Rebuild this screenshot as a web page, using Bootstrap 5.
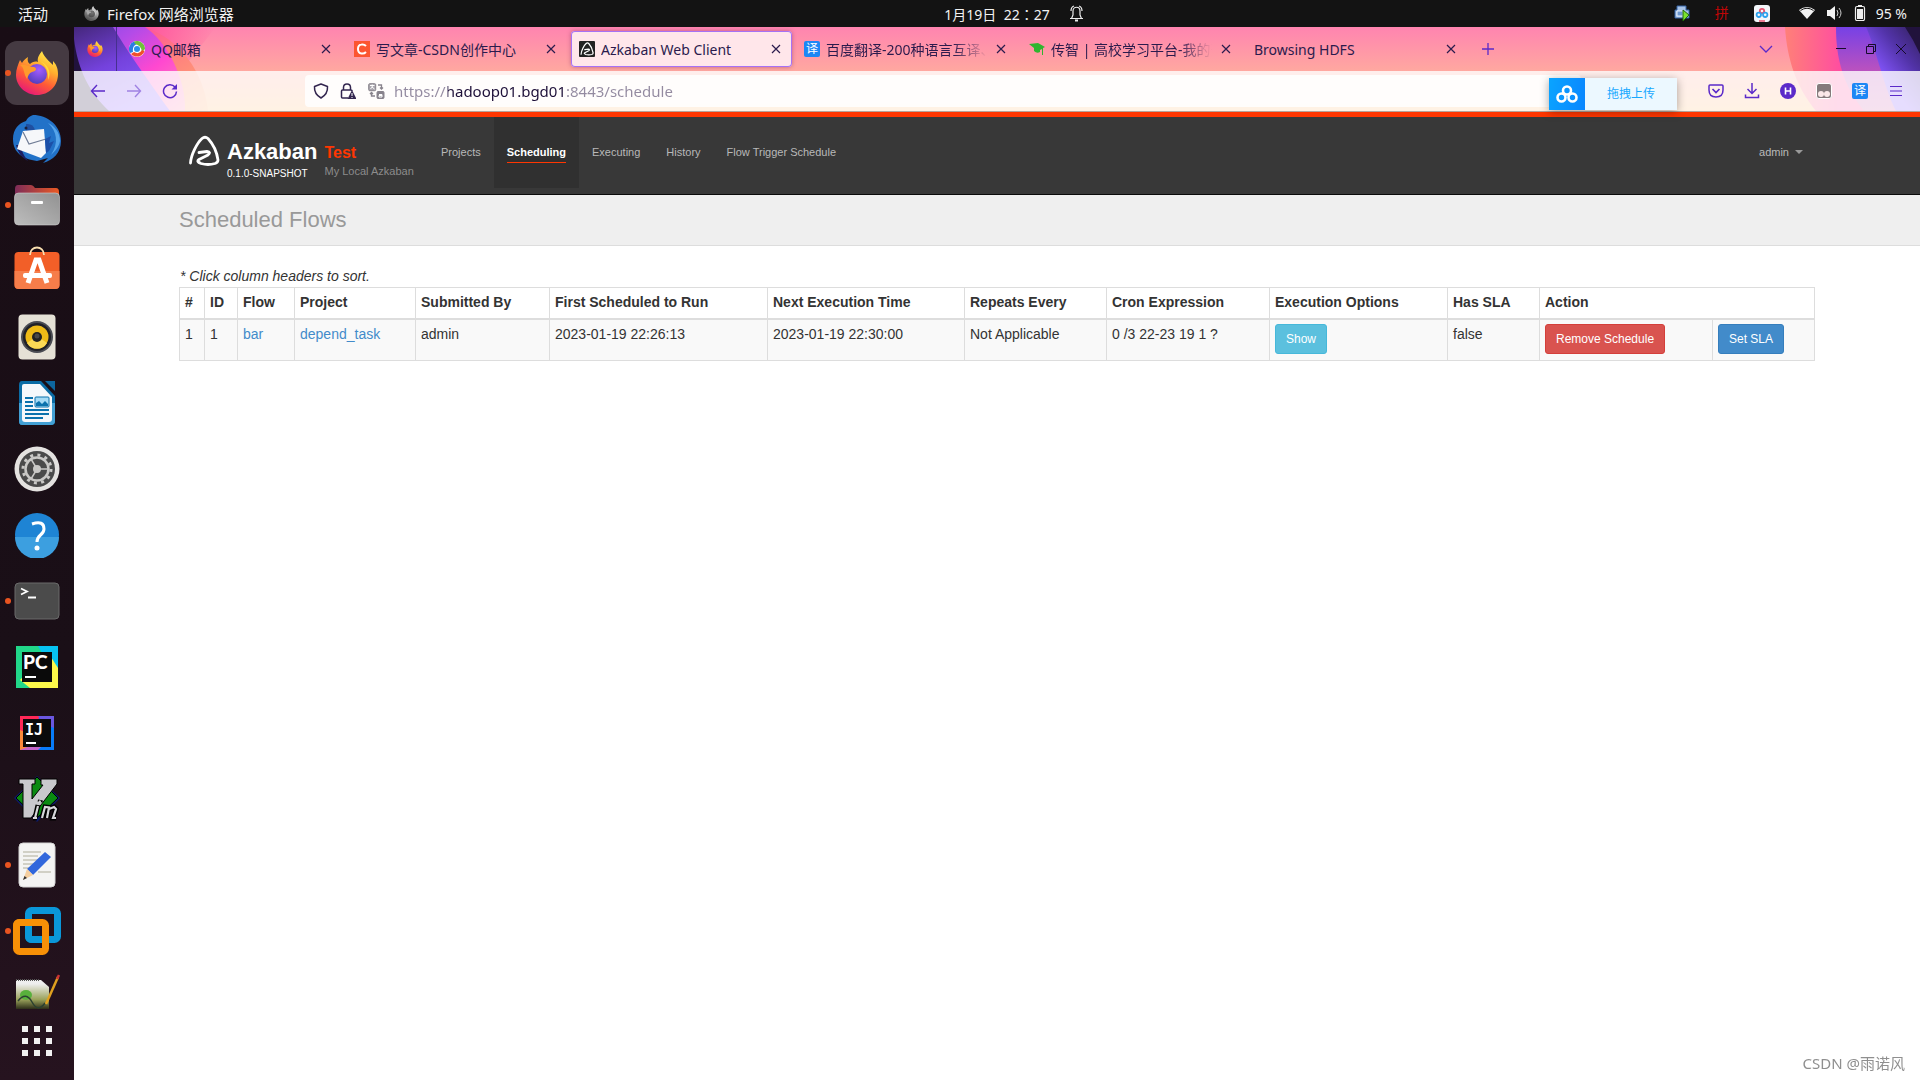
<!DOCTYPE html>
<html lang="zh-CN">
<head>
<meta charset="utf-8">
<meta name="viewport" content="width=device-width, initial-scale=1">
<title>Azkaban Web Client</title>
<link href="https://cdn.jsdelivr.net/npm/bootstrap@5.3.0/dist/css/bootstrap.min.css" rel="stylesheet">
<style>
  :root { --ui: "Noto Sans", "Noto Sans CJK SC", sans-serif; --web: "Liberation Sans", "Noto Sans CJK SC", sans-serif; --ink: #2b1b4d; --violet: #5b2ac9; }
  body { font-family: var(--ui); font-size: 14px; line-height: 20px; background: #fff; }
  svg { display: block; flex: none; }
  button { font-family: inherit; }
  .plain-btn { background: none; border: 0; padding: 0; color: inherit; display: flex; align-items: center; justify-content: center; }

  /* desktop top bar */
  .desk-bar { display: grid; grid-template-columns: 74px 1fr auto 1fr; height: 27px; background: #131313; color: #f2f2f2; }
  .desk-bar .clock { font-family: "Noto Sans", "Noto Sans CJK TC", sans-serif; gap: 20px; padding-left: 33px; }
  .desk-bar .clock span { padding-top: 4px; }
  .activities { font-size: 15px; padding: 2px 8px 0 0; }
  .app-name { font-size: 15px; padding-top: 2px; }
  .status-icons { padding-right: 13px; }
  .status-icons .pinyin { width: 64px; color: #c00606; }
  .status-icons .level { padding: 2px 0 0 6px; }

  /* dock */
  .dock { width: 74px; background: linear-gradient(#190d15, #1a0f17 60%, #26131f); padding: 14px 5px 7px; }
  .dock-list { min-height: 0; overflow: hidden; gap: 2px; }
  .dock-item { position: relative; width: 64px; height: 64px; flex: none; border-radius: 12px; }
  .dock-item.current { background: #453a42; }
  .dock-item.running::before { content: ""; position: absolute; left: 0; top: 29px; width: 6px; height: 6px; border-radius: 50%; background: #e95420; }

  /* browser chrome */
  .chrome { position: relative; background: linear-gradient(#ff84b0, #ffa8a0 44px, #ffbe78 84px); color: var(--ink); }
  .theme-art { position: absolute; top: 0; height: 84px; }
  .theme-art.start-art { left: 0; }
  .theme-art.end-art { right: 0; }
  .tab-strip { position: relative; height: 44px; }
  .pinned { width: 43px; height: 44px; border-right: 1px solid #46308f; margin-right: 4px; }
  .tab-list { gap: 4px; }
  .tab-box { width: 221px; height: 36px; padding: 0 8px; border-radius: 4px; gap: 6px; }
  .tab-box.current { background: #ffe6ea; box-shadow: 0 0 0 1px #a672f5 inset, 0 0 4px #80306080; }
  .tab-link { flex: 1; min-width: 0; color: var(--ink); text-decoration: none; white-space: nowrap; overflow: hidden; padding-top: 2px; }
  .tab-link.faded { -webkit-mask-image: linear-gradient(to left, transparent, #000 34px); mask-image: linear-gradient(to left, transparent, #000 34px); }
  .tab-close { width: 16px; height: 16px; }
  .win-btn { width: 30px; height: 30px; }
  .new-tab { margin-left: 6px; }
  .all-tabs { margin-right: 45px; }
  .tool-row { position: relative; height: 41px; background: rgba(255,255,255,.8); border-bottom: 1px solid #b5a39c; color: var(--violet); padding: 0 6px; }
  .tool-btn { width: 36px; height: 36px; }
  .address { flex: 1; height: 32px; margin: 0 117px; padding: 0 8px; border-radius: 4px; background: rgba(255,255,255,.85); color: #33264f; }
  .address input { flex: 1; border: 0; outline: 0; padding: 1px 0 0; margin-left: 1px; font-size: 15px; height: 24px; color: transparent; background: linear-gradient(to right, #938aa0 54px, #1d0f38 54px, #1d0f38 171px, #938aa0 171px); -webkit-background-clip: text; background-clip: text; -webkit-text-fill-color: transparent; }
  .upload-pill { position: absolute; right: 243px; top: 51px; height: 32px; z-index: 5; background: #ecf8ff; color: #18a8ff; box-shadow: 0 2px 10px rgba(0,0,0,.35); font-size: 12px; }
  .upload-pill .pill-logo { width: 36px; height: 32px; background: linear-gradient(100deg, #0aa4ff, #0a86ff); }
  .upload-pill .pill-text { width: 92px; }

  /* Azkaban page */
  .web { font-family: var(--web); color: #333; font-size: 14px; }
  .az-bar { background: #383838; border-top: 5px solid #ff3601; border-bottom: 1px solid #0a0a0a; height: 83px; padding: 0 105px; align-items: flex-start; }
  .az-brand { padding: 18px 0 0 9px; gap: 6px; width: 249px; color: #fff; text-decoration: none; }
  .az-title { font-size: 22px; line-height: 24px; padding: 5px 1px 0; font-weight: bold; }
  .az-sub { font-size: 10px; line-height: 12px; padding: 4px 1px 0; }
  .az-env { font-size: 16px; line-height: 24px; padding-top: 6px; font-weight: bold; color: #ff3601; }
  .az-envsub { font-size: 11px; line-height: 12px; color: #8c8c8c; }
  .az-nav .nav-link { font-size: 11px; line-height: 20px; height: 71px; padding: 25px 13px 0; color: #b8b8b8; }
  .az-nav .nav-link.active { background: #303030; color: #fff; font-weight: bold; }
  .az-nav .nav-link.active span { display: block; border-bottom: 1px solid #ff3601; }
  .az-user { padding: 25px 12px 0; font-size: 11px; line-height: 20px; color: #b8b8b8; gap: 6px; }
  .az-user::after { margin: 0; border-top-width: 4px; border-left-width: 4px; border-right-width: 4px; color: #999; }
  .az-head { background: #efefef; border-bottom: 1px solid #ddd; height: 51px; padding: 13px 105px 0; }
  .az-head h1 { font-size: 22px; line-height: 24px; color: #999; font-weight: 400; margin: 0; }
  .az-main { padding: 20px 105px; }
  .az-hint { font-style: italic; line-height: 20px; padding-left: 1px; margin: 0 0 1px; }
  .flow-table { --bs-table-striped-bg: #f9f9f9; --bs-table-striped-color: #333; table-layout: fixed; border-color: #ddd; color: #333; margin: 0; border-collapse: collapse; }
  .flow-table > :not(caption) > * > * { padding: 4px 5px; border: 1px solid #ddd; line-height: 20px; white-space: nowrap; }
  .flow-table > thead > tr > th { border-bottom-width: 2px; height: 32px; vertical-align: top; }
  .flow-table > tbody > tr > td { height: 41px; }
  .flow-table a { color: #428bca; text-decoration: none; }
  .act-btn { font-size: 12px; line-height: 18px; padding: 5px 10px; border-radius: 3px; color: #fff; display: block; --bs-btn-color: #fff; }
  .act-info { background: #5bc0de; border-color: #46b8da; }
  .act-danger { background: #d9534f; border-color: #d43f3a; }
  .act-primary { background: #428bca; border-color: #357ebd; }
  .watermark { position: fixed; right: 15px; bottom: 6px; font-size: 15px; line-height: 22px; color: #8f8f8f; }
</style>
</head>
<body class="vh-100 d-flex flex-column overflow-hidden">

<svg width="0" height="0" class="position-absolute" aria-hidden="true">
  <defs>
    <linearGradient id="ffFlame" x1=".8" y1="0" x2=".3" y2="1"><stop offset="0" stop-color="#fff44f"/><stop offset=".35" stop-color="#ffb02e"/><stop offset=".65" stop-color="#ff5a36"/><stop offset="1" stop-color="#e6177a"/></linearGradient>
    <radialGradient id="ffGlobe" cx=".6" cy=".3" r=".8"><stop offset="0" stop-color="#a35cff"/><stop offset="1" stop-color="#4a3bb5"/></radialGradient>
    <symbol id="firefox" viewBox="0 0 44 44">
      <path d="M27 0C24 4 22 7 23 11C20 10 17 11 15 13C13 12 12 9 13 6C10 8 8 10 7 12L5 9C3 14 1 18 1 24C1 35 11 44 22 44C34 44 43 35 43 23C43 17 41 13 38 10L38 14C34 10 29 6 27 0Z" fill="url(#ffFlame)"/>
      <circle cx="22" cy="23" r="10" fill="url(#ffGlobe)"/>
      <path d="M5 14C9 12 14 16 19 16C22 17 22 20 17 21C14 22 13 25 12 28C8 22 10 17 5 14Z" fill="#ff9a2c"/>
      <path d="M25 10C33 13 37 22 33 29C34 21 31 14 25 10Z" fill="#ffd93b"/>
    </symbol>
    <symbol id="close" viewBox="0 0 16 16"><path d="M4 4L12 12M12 4L4 12" stroke="currentColor" stroke-width="1.2"/></symbol>
    <symbol id="azlogo" viewBox="0 0 32 32"><path d="M2.500 28C3 20 9 8 14 3.500Q17 1 20 3.500C25 9 29 18 30 25Q30 27.500 27 28.500Q20 30.500 13 28.500Q8 26.500 11 24.500L20 20Q23.500 17 19 16.500L11 17.500" fill="none" stroke="#fff" stroke-width="2.800" stroke-linejoin="round" stroke-linecap="round"/></symbol>
  </defs>
</svg>

<header class="desk-bar">
  <button class="plain-btn activities" type="button">活动</button>
  <div class="d-flex align-items-center">
    <svg class="me-2" style="filter:grayscale(1);margin-left:10px" width="15" height="15" aria-hidden="true"><use href="#firefox"/></svg>
    <span class="app-name">Firefox 网络浏览器</span>
  </div>
  <div class="clock d-flex align-items-center">
    <span lang="zh-TW">1月19日&nbsp; 22：27</span>
    <svg width="13" height="17" viewBox="0 0 13 17" fill="none" stroke="#eee" stroke-width="1.200"><path d="M0 13.500H13M1.500 13.500L3 10V6C3 1 10 1 10 6V10L11.500 13.500M1 6Q1 2 4 1M12 6Q12 2 9 1"/><path d="M5 15.500H8" stroke-width="2"/></svg>
  </div>
  <div class="status-icons d-flex align-items-center justify-content-end">
    <svg width="16" height="17" viewBox="0 0 16 17"><path d="M3 1H12V5H15V13H1V5H3Z" fill="#a9c4e8" stroke="#3463a5"/><path d="M3 6H9V11H3Z" fill="#6b96cf" stroke="#e5eefa"/><path d="M9 5L15 10L9 16Z" fill="#7be32c" stroke="#1f6b0b"/></svg>
    <span class="pinyin d-flex justify-content-center">拼</span>
    <svg width="16" height="17" viewBox="0 0 16 17"><rect width="16" height="17" rx="3" fill="#f3f6fa"/><g fill="none" stroke-width="1.800"><circle cx="8" cy="6" r="2.200" stroke="#e7526f"/><circle cx="4.800" cy="9.800" r="2.200" stroke="#2aa1ee"/><circle cx="11.200" cy="9.800" r="2.200" stroke="#2aa1ee"/></g><path d="M5 16H11" stroke="#e7526f" stroke-width="1.500"/></svg>
    <svg class="ms-4" width="24" height="14" viewBox="-5 0 24 14"><path d="M0 4Q8 -2 16 4L8 13Z" fill="#f2f2f2"/><path d="M1.500 4.500Q8 0 14.500 4.500" fill="none" stroke="#131313"/></svg>
    <svg class="ms-2" width="20" height="14" viewBox="-1 0 20 14"><path d="M0 4H3L8 0V14L3 10H0Z" fill="#f2f2f2"/><path d="M10 4Q12 7 10 10M12 2Q16 7 12 12" fill="none" stroke="#ccc"/></svg>
    <svg class="ms-2 me-1" width="12" height="16" viewBox="0 0 12 16"><path d="M4 0H8V2H4Z" fill="#eee"/><rect x="1.500" y="1.500" width="9" height="14" rx="1.500" fill="none" stroke="#eee" stroke-width="1.200"/><path d="M3 4H9V14H3Z" fill="#eee"/></svg>
    <span class="level">95 %</span>
  </div>
</header>

<div class="d-flex flex-grow-1" style="min-height:0">
  <nav class="dock d-flex flex-column flex-shrink-0" aria-label="Dock">
    <div class="dock-list d-flex flex-column flex-grow-1">
      <button class="plain-btn dock-item current running" type="button" aria-label="Firefox"><svg width="44" height="44"><use href="#firefox"/></svg></button>
      <button class="plain-btn dock-item" type="button" aria-label="Thunderbird"><svg width="48" height="48" viewBox="0 0 48 48">
        <path d="M20 0C34 0 48 10 48 26C48 38 40 45 30 48L35 43L24 46C10 44 0 38 0 24C0 14 6 8 13 6C14 3 17 1 20 0Z" fill="#2272c8"/>
        <path d="M3 30C5 38 9 43 15 46C9 38 8 34 9 30Z" fill="#1b1e63"/><path d="M35 8C44 16 46 28 38 40C42 36 46 32 47 26C47 18 42 11 35 8Z" fill="#55a4ea"/><path d="M13 9Q20 8 22 15L13 18Z" fill="#1f4fa0"/>
        <path d="M10 16L31 14L33 38L28 43L4 34Z" fill="#f6f7fa"/><path d="M10 17L16 29L33 24" fill="none" stroke="#6f7c95" stroke-width="1.200"/><path d="M32 24L38 21L36 28L41 26L36 36L33 38Z" fill="#1c4fa8"/><circle cx="13" cy="13" r="1.500" fill="#18203f"/></svg></button>
      <button class="plain-btn dock-item running" type="button" aria-label="文件"><svg width="46" height="42" viewBox="0 0 46 42">
        <defs><linearGradient id="fol"><stop offset="0" stop-color="#7d2c58"/><stop offset="1" stop-color="#ea5a24"/></linearGradient><linearGradient id="fog" x1="1" y1="0" x2="0" y2="1"><stop offset="0" stop-color="#929292"/><stop offset="1" stop-color="#bdbdbd"/></linearGradient></defs>
        <path d="M1 5Q1 1 4 1H17Q19 1 21 4H42Q45 4 45 8V20H1Z" fill="url(#fol)"/><rect x=".5" y="9" width="45" height="32" rx="4" fill="url(#fog)" stroke="#d0d0d0" stroke-width=".6"/><rect x="17" y="17" width="12" height="3" rx="1" fill="#fff"/></svg></button>
      <button class="plain-btn dock-item" type="button" aria-label="Ubuntu Software"><svg width="46" height="50" viewBox="0 0 46 50">
        <rect x=".5" y="6" width="45" height="37" rx="4" fill="#f25f28"/><path d="M.5 25H45.500V39Q45.500 43 41 43H5Q.5 43 .5 39Z" fill="#f67d4a"/><path d="M16 9C16 -1 30 -1 30 9" fill="none" stroke="#f9dfb0" stroke-width="1.800"/>
        <path d="M14 37L22 14H25L33 37" fill="none" stroke="#fff" stroke-width="5"/><rect x="9" y="27" width="29" height="5" rx="2" fill="#fff"/></svg></button>
      <button class="plain-btn dock-item" type="button" aria-label="Rhythmbox"><svg width="38" height="46" viewBox="0 0 38 46">
        <rect x=".5" y=".5" width="37" height="45" rx="4" fill="#e5e1d6"/><circle cx="19" cy="23" r="16" fill="#4a4c53"/><circle cx="19" cy="23" r="14" fill="#202127"/><circle cx="19" cy="23" r="11.500" fill="#efbb17"/><path d="M9 29A11.500 11.500 0 0 0 29 29L22 24H16Z" fill="#fad955"/><circle cx="19" cy="23" r="5" fill="#222"/><circle cx="19" cy="22" r="2.500" fill="#484848"/></svg></button>
      <button class="plain-btn dock-item" type="button" aria-label="LibreOffice Writer"><svg width="38" height="46" viewBox="0 0 38 46">
        <path d="M4 1H23L37 16V41Q37 45 33 45H4Q1 45 1 41V5Q1 1 4 1Z" fill="#0b6ca5"/><path d="M1 23H37V41Q37 45 33 45H4Q1 45 1 41Z" fill="#42a0d4"/><path d="M6 4H22L34 17V39Q34 42 31 42H7Q4 42 4 39V6Q4 4 6 4Z" fill="#f5f8fb"/><path d="M27 1H37V11Z" fill="#0d669e"/>
        <path d="M7 18H15M7 22H15M7 26H15M7 30H31M7 34H31M7 38H25" stroke="#0b72ad" stroke-width="2"/><rect x="17" y="17" width="14" height="10" rx="1" fill="#a6dbf5" stroke="#0b72ad"/><path d="M18 26V23L21 21L24 24L27 21L30 24V26Z" fill="#0b72ad"/></svg></button>
      <button class="plain-btn dock-item" type="button" aria-label="设置"><svg width="46" height="46" viewBox="0 0 46 46">
        <circle cx="23" cy="23" r="22.500" fill="#e4e2e0"/><circle cx="23" cy="23" r="18" fill="#4a4a4a"/><circle cx="23" cy="23" r="14" fill="none" stroke="#c9c8c6" stroke-width="3" stroke-dasharray="3 4.330"/><circle cx="23" cy="23" r="11.500" fill="none" stroke="#c9c8c6" stroke-width="2.500"/><circle cx="23" cy="23" r="4" fill="#c9c8c6"/><path d="M23 23H34M23 23L17 13M23 23L17 33" stroke="#c9c8c6" stroke-width="1.500"/></svg></button>
      <button class="plain-btn dock-item" type="button" aria-label="帮助"><svg width="46" height="46" viewBox="0 0 46 46">
        <circle cx="23" cy="23" r="22" fill="#1e84d4"/><path d="M1 25A22 22 0 0 0 45 25Z" fill="#3c9fe0"/><path d="M18 12Q30 8 30 17Q30 20 26.500 23Q23 26 23 30" fill="none" stroke="#fff" stroke-width="3"/><circle cx="23" cy="36" r="2.500" fill="#fff"/></svg></button>
      <button class="plain-btn dock-item running" type="button" aria-label="终端"><svg width="46" height="38" viewBox="0 0 46 38">
        <rect x="1" y="1" width="44" height="36" rx="4" fill="#4b4b4b" stroke="#6a6a6a"/><path d="M7 6.500L13 9.500L7 12.500M14 15.500H22" fill="none" stroke="#fff" stroke-width="1.800"/></svg></button>
      <button class="plain-btn dock-item" type="button" aria-label="PyCharm"><svg width="42" height="42" viewBox="0 0 42 42">
        <path d="M0 0H42V42H0Z" fill="#21d789"/><path d="M22 0H42V24L30 14Z" fill="#07c3f2"/><path d="M42 14V42H14L4 34L30 6Z" fill="#fcf84a"/><path d="M28 0H42V22Z" fill="#07c3f2"/><path d="M6 6H36V36H6Z" fill="#0a0a0a"/><path d="M9 31H20" stroke="#fff" stroke-width="2"/><text x="7" y="23" font-family="Lato" font-weight="900" font-size="19" fill="#fff">PC</text></svg></button>
      <button class="plain-btn dock-item" type="button" aria-label="IntelliJ IDEA"><svg width="34" height="34" viewBox="0 0 34 34">
        <path d="M0 0H34V34H0Z" fill="#087cfa"/><path d="M0 0H20L8 24L0 18Z" fill="#fe2857"/><path d="M18 0H34V12L24 8Z" fill="#6b57e0"/><path d="M0 14L10 18V34L0 34Z" fill="#f98a3c"/><path d="M10 30H22L18 34H0Z" fill="#c264c9"/><path d="M3 3H31V31H3Z" fill="#0b0b0c"/><path d="M6 27H16" stroke="#fff" stroke-width="2"/><text x="5" y="19" font-family="DejaVu Sans Mono" font-weight="700" font-size="15" fill="#fff">IJ</text></svg></button>
      <button class="plain-btn dock-item" type="button" aria-label="Vim"><svg width="46" height="46" viewBox="0 0 46 46">
        <path d="M23 0L46 22L23 46L0 22Z" fill="#0c1b6b"/><path d="M23 1L44 22L23 42L2 22Z" fill="#0a8a12" stroke="#000"/><path d="M5 3H21V8H18V23L29 9H27V3H43V8L17 42H9V8H5Z" fill="#c9c9cd" stroke="#000"/><path d="M24 29L21 42M26 26L26.500 24M28 42L31 31L35 31.500L33 42M35 33L40 31L42 33L39 42H42M19 42H23" fill="none" stroke="#000" stroke-width="5"/><path d="M24 30L21 42M25.500 26.500L26 24.500M28 42L31 31L35 31.500L33 42M35 33L40 31L42 33L39 42H42M19 42H23" fill="none" stroke="#d6d6da" stroke-width="2.200"/></svg></button>
      <button class="plain-btn dock-item running" type="button" aria-label="文本编辑器"><svg width="38" height="46" viewBox="0 0 38 46">
        <rect x="1" y="1" width="36" height="44" rx="4" fill="#f4f4f3" stroke="#d5d5d5"/><path d="M5 10H23M5 14H20M5 18H26M5 22H19M5 26H16M20 30H33" stroke="#c5c3b8" stroke-width="1.600"/><path d="M9 27L27 10L33 15L15 33Z" fill="#3167dc"/><path d="M9 27L15 33L5 38Z" fill="#f5cfa0"/><path d="M5 38L6.500 34L9 36Z" fill="#333"/></svg></button>
      <button class="plain-btn dock-item running" type="button" aria-label="VMware"><svg width="48" height="48" viewBox="0 0 48 48" fill="none" stroke-width="7">
        <rect x="15.500" y="3.500" width="29" height="29" rx="3" stroke="#0a97d9"/><rect x="3.500" y="15.500" width="29" height="29" rx="3" stroke="#f79007"/><path d="M15.500 19V29Q15.500 32.500 19 32.500H29" stroke="#0a97d9"/><path d="M3.500 32V19Q3.500 15.500 7 15.500H22" stroke="#f79007"/></svg></button>
      <button class="plain-btn dock-item" type="button" aria-label="Notepad"><svg width="46" height="52" viewBox="0 0 46 52">
        <defs><linearGradient id="npg" x2="0" y2="1"><stop offset=".1" stop-color="#eee"/><stop offset=".5" stop-color="#9aa25b"/><stop offset=".75" stop-color="#2a2a17"/></linearGradient></defs><path d="M2 9H27L35 16V48H2Z" fill="url(#npg)"/><path d="M2 9H26" stroke="#555" stroke-dasharray="1 1" stroke-width="2"/><ellipse cx="12" cy="24" rx="6" ry="5" fill="#58b03c"/><path d="M4 30Q12 20 18 31T31 32" stroke="#2b4030" fill="none" stroke-width="1.500"/><path d="M44 6L32 33" stroke="#dfa01f" stroke-width="2.500"/><path d="M45 4L43 8" stroke="#c33" stroke-width="2.500"/></svg></button>
    </div>
    <button class="plain-btn dock-item" type="button" aria-label="显示应用程序"><svg width="30" height="30" viewBox="0 0 30 30" fill="#f2f2f2"><path d="M0 0h6v6h-6zM12 0h6v6h-6zM24 0h6v6h-6zM0 12h6v6h-6zM12 12h6v6h-6zM24 12h6v6h-6zM0 24h6v6h-6zM12 24h6v6h-6zM24 24h6v6h-6z"/></svg></button>
  </nav>

  <div class="flex-grow-1 d-flex flex-column" style="min-width:0">
    <div class="chrome">
      <svg class="theme-art start-art" width="150" height="84" viewBox="0 0 150 84" aria-hidden="true">
        <defs>
          <linearGradient id="a1" x1="0" y1="0" x2="1" y2="1"><stop offset="0" stop-color="#ff5c9d"/><stop offset=".25" stop-color="#ff4f9f"/><stop offset=".5" stop-color="#ff7a80"/><stop offset="1" stop-color="#ffb070"/></linearGradient>
          <linearGradient id="a2" x1="0" y1="0" x2="1" y2="1"><stop offset="0" stop-color="#7d48e8"/><stop offset=".3" stop-color="#b44be8"/><stop offset=".6" stop-color="#ff48d0"/><stop offset="1" stop-color="#ff90b0"/></linearGradient>
          <linearGradient id="a3" x1="0" y1="0" x2=".5" y2="1"><stop offset="0" stop-color="#45277c"/><stop offset=".5" stop-color="#7442dc"/><stop offset="1" stop-color="#8a5cff"/></linearGradient>
          <linearGradient id="a0"><stop offset="0" stop-color="#ff4f9a"/><stop offset="1" stop-color="#ff4f9a" stop-opacity="0"/></linearGradient>
        </defs>
        <path d="M60 0H142L110 40Z" fill="url(#a0)"/>
        <path d="M0 0H71C105 12 130 44 134 84H0Z" fill="url(#a1)"/>
        <path d="M0 0H71C92 14 112 50 111 84H0Z" fill="url(#a2)"/>
        <path d="M0 0H39C52 22 66 42 96 84H0Z" fill="url(#a3)"/>
        <path d="M0 12C4 44 16 66 35 84H0Z" fill="#21123c"/>
      </svg>
      <svg class="theme-art end-art" width="180" height="84" viewBox="0 0 180 84" aria-hidden="true">
        <defs>
          <linearGradient id="b1"><stop offset="0" stop-color="#ff8078"/><stop offset=".4" stop-color="#ff4f9f"/></linearGradient>
          <linearGradient id="b2" x2="0" y2="1"><stop offset="0" stop-color="#7641e6"/><stop offset=".5" stop-color="#b851c0"/><stop offset="1" stop-color="#d070b0"/></linearGradient>
          <linearGradient id="b3" x1="1" y1="0" x2=".2" y2="1"><stop offset="0" stop-color="#32205c"/><stop offset=".35" stop-color="#5233a8"/><stop offset=".7" stop-color="#8355fb"/></linearGradient>
        </defs>
        <path d="M45 0C47 32 56 60 76 84H180V0Z" fill="url(#b1)"/>
        <path d="M96 0C96 32 103 58 124 84H180V0Z" fill="url(#b2)"/>
        <path d="M126 0C136 22 144 60 156 84H180V0Z" fill="url(#b3)"/>
        <path d="M165 0Q173 12 180 27V0Z" fill="#21123c"/>
      </svg>

      <div class="tab-strip d-flex align-items-center">
        <div class="pinned d-flex align-items-center"><button class="plain-btn w-100" type="button" aria-label="Firefox"><svg width="16" height="16"><use href="#firefox"/></svg></button></div>
        <div class="tab-list d-flex">
          <div class="tab-box d-flex align-items-center">
            <svg width="16" height="16" viewBox="0 0 16 16"><circle cx="8" cy="8" r="8" fill="#fff"/><path d="M1 12A8 8 0 0 1 5 .6L8 3Q3 5 4 11Z" fill="#2a7de1"/><path d="M5 .6A8 8 0 0 1 16 8L13 11Q12 4 6 3Z" fill="#6fc03a"/><path d="M15.500 10A8 8 0 0 1 2 13L5 11Q10 14 13 9Z" fill="#f0502a"/><circle cx="8" cy="8" r="3" fill="#2a90e8"/></svg>
            <a class="tab-link" href="#">QQ邮箱</a><button class="plain-btn tab-close" type="button" aria-label="关闭"><svg width="16" height="16"><use href="#close"/></svg></button>
          </div>
          <div class="tab-box d-flex align-items-center">
            <svg width="16" height="16" viewBox="0 0 16 16"><path d="M0 0H16V16H0Z" fill="#fc5531"/><path d="M12 5Q10 3 7.500 3.500Q4 4 4 8T7.500 12.500Q10 13 12 11" fill="none" stroke="#fff" stroke-width="2"/></svg>
            <a class="tab-link" href="#">写文章-CSDN创作中心</a><button class="plain-btn tab-close" type="button" aria-label="关闭"><svg width="16" height="16"><use href="#close"/></svg></button>
          </div>
          <div class="tab-box current d-flex align-items-center">
            <svg width="16" height="16" viewBox="0 0 16 16"><rect width="16" height="16" rx="1" fill="#222"/><use href="#azlogo" x="1" y="1" width="14" height="14"/></svg>
            <a class="tab-link" href="#" aria-current="page">Azkaban Web Client</a><button class="plain-btn tab-close" type="button" aria-label="关闭"><svg width="16" height="16"><use href="#close"/></svg></button>
          </div>
          <div class="tab-box d-flex align-items-center">
            <svg width="16" height="16" viewBox="0 0 16 16"><rect width="16" height="16" rx="2" fill="#1c87f5"/><text x="2" y="12" font-size="12" fill="#fff">译</text></svg>
            <a class="tab-link faded" href="#">百度翻译-200种语言互译、</a><button class="plain-btn tab-close" type="button" aria-label="关闭"><svg width="16" height="16"><use href="#close"/></svg></button>
          </div>
          <div class="tab-box d-flex align-items-center">
            <svg width="16" height="16" viewBox="0 0 16 16" fill="#2fb52f"><path d="M0 3L9 2L16 6L14 7V14H13V8L11 9V11Q8 13 5 10V7Z"/></svg>
            <a class="tab-link faded" href="#">传智 | 高校学习平台-我的预</a><button class="plain-btn tab-close" type="button" aria-label="关闭"><svg width="16" height="16"><use href="#close"/></svg></button>
          </div>
          <div class="tab-box d-flex align-items-center">
            <a class="tab-link" href="#">Browsing HDFS</a><button class="plain-btn tab-close" type="button" aria-label="关闭"><svg width="16" height="16"><use href="#close"/></svg></button>
          </div>
        </div>
        <button class="plain-btn win-btn new-tab" style="color:var(--violet)" type="button" aria-label="新建标签页"><svg width="14" height="14" viewBox="0 0 14 14"><path d="M7 1V13M1 7H13" stroke="currentColor" stroke-width="1.300"/></svg></button>
        <button class="plain-btn win-btn ms-auto all-tabs" style="color:var(--violet)" type="button" aria-label="标签列表"><svg width="14" height="8" viewBox="0 0 14 8"><path d="M1 1L7 7L13 1" fill="none" stroke="currentColor" stroke-width="1.300"/></svg></button>
        <button class="plain-btn win-btn" type="button" aria-label="最小化"><svg width="10" height="10" viewBox="0 0 10 10"><path d="M0 4.500H10" stroke="#160b2b"/></svg></button>
        <button class="plain-btn win-btn" type="button" aria-label="还原"><svg width="10" height="10" viewBox="0 0 10 10" fill="none" stroke="#160b2b"><path d="M.5 2.500H7.500V9.500H.5ZM2.500 2.500V.5H9.500V7.500H7.500"/></svg></button>
        <button class="plain-btn win-btn me-1" type="button" aria-label="关闭窗口"><svg width="10" height="10" viewBox="0 0 10 10"><path d="M0 0L10 10M10 0L0 10" stroke="#160b2b"/></svg></button>
      </div>

      <div class="tool-row d-flex align-items-center">
        <button class="plain-btn tool-btn" type="button" aria-label="后退"><svg width="16" height="14" viewBox="0 0 16 14"><path d="M7 1L1.500 7L7 13M2 7H15" fill="none" stroke="currentColor" stroke-width="1.400"/></svg></button>
        <button class="plain-btn tool-btn opacity-50" type="button" aria-label="前进"><svg width="16" height="14" viewBox="0 0 16 14"><path d="M9 1L14.500 7L9 13M14 7H1" fill="none" stroke="currentColor" stroke-width="1.400"/></svg></button>
        <button class="plain-btn tool-btn" type="button" aria-label="刷新"><svg width="16" height="16" viewBox="0 0 16 16"><path d="M13 4A6.500 6.500 0 1 0 14.500 8.500" fill="none" stroke="currentColor" stroke-width="1.500"/><path d="M15 1V6.500H9.500Z" fill="currentColor"/></svg></button>
        <div class="address d-flex align-items-center">
          <svg width="16" height="16" viewBox="0 0 16 16"><path d="M8 1L14.500 3.500Q15 11 8 15Q1 11 1.500 3.500Z" fill="none" stroke="currentColor" stroke-width="1.500" stroke-linejoin="round"/></svg>
          <svg class="ms-2 me-1" style="padding-left:3px" width="19" height="16" viewBox="0 0 16 16"><path d="M3.500 7V4.500Q3.500 1 7 1T10.500 4.500V7M8 15H2.500Q1.500 15 1.500 14V8Q1.500 7 2.500 7H11Q12 7 12 8" fill="none" stroke="currentColor" stroke-width="1.500"/><path d="M12 7L16.500 16H7.500Z" fill="currentColor"/><path d="M12 10V13M12 14V15" stroke="#fff"/></svg>
          <svg class="ms-2 me-2" width="17" height="16" viewBox="0 0 17 16" fill="none" stroke="#88838c"><rect x=".7" y=".7" width="7" height="7" rx="1" fill="#aaa6ad"/><path d="M2 2.500H6.500M4.200 1.500V4L2.500 6M4 4L6.500 6" stroke="#fff"/><rect x="9" y="8.500" width="7" height="7" rx="1" fill="#88838c"/><path d="M11 11.500H14V14H11V12.500H14" stroke="#fff"/><path d="M10 2H13.500V6M12 4.500L13.500 6L15 4.500M7 13H3.500V10M2 11L3.500 9.500L5 11" stroke-width="1.300"/></svg>
          <input type="text" value="https://hadoop01.bgd01:8443/schedule" aria-label="地址">
        </div>
        <button class="plain-btn tool-btn" type="button" aria-label="Pocket"><svg width="16" height="16" viewBox="0 0 16 16" fill="none" stroke="currentColor" stroke-width="1.500"><path d="M2 2H14Q15 2 15 3V7Q15 14 8 14T1 7V3Q1 2 2 2Z"/><path d="M4.500 6L8 9.500L11.500 6" stroke-width="1.700"/></svg></button>
        <button class="plain-btn tool-btn" type="button" aria-label="下载"><svg width="16" height="16" viewBox="0 0 16 16" fill="none" stroke="currentColor" stroke-width="1.500"><path d="M8 0V10.500M3.500 6L8 10.500L12.500 6M1.500 11.500V14.500H14.500V11.500"/></svg></button>
        <button class="plain-btn tool-btn" type="button" aria-label="账户"><svg width="16" height="16" viewBox="0 0 16 16"><circle cx="8" cy="8" r="8" fill="currentColor"/><path d="M5.500 4.500V11.500M10.500 4.500V11.500M5.500 8H10.500" stroke="#fff" stroke-width="1.600"/></svg></button>
        <button class="plain-btn tool-btn" type="button" aria-label="Tampermonkey"><svg width="16" height="16" viewBox="0 0 16 16"><rect x=".5" y=".5" width="15" height="15" rx="2.500" fill="#857b7c" stroke="#fff"/><circle cx="5" cy="11" r="3" fill="#fbe9e9"/><circle cx="11" cy="11" r="3" fill="#fbe9e9"/></svg></button>
        <button class="plain-btn tool-btn" type="button" aria-label="翻译"><svg width="16" height="16" viewBox="0 0 16 16"><rect width="16" height="16" rx="2" fill="#1c87f5"/><text x="2" y="12" font-size="12" fill="#fff">译</text></svg></button>
        <button class="plain-btn tool-btn" type="button" aria-label="菜单"><svg width="12" height="10" viewBox="0 0 12 10"><path d="M0 .5H12M0 5H12M0 9.500H12" stroke="currentColor" stroke-width="1.200"/></svg></button>
      </div>

      <button class="upload-pill plain-btn" type="button">
        <span class="pill-logo d-flex align-items-center justify-content-center"><svg width="22" height="18" viewBox="0 0 22 18" fill="none" stroke="#fff" stroke-width="2.600"><circle cx="11" cy="5.500" r="4"/><circle cx="5.500" cy="12.500" r="4"/><circle cx="16.500" cy="12.500" r="4"/></svg></span>
        <span class="pill-text">拖拽上传</span>
      </button>
    </div>

    <div class="web flex-grow-1">
      <div class="az-bar d-flex">
        <a class="az-brand d-flex" href="#">
          <svg width="32" height="32"><use href="#azlogo"/></svg>
          <span><span class="az-title d-block">Azkaban</span><span class="az-sub d-block">0.1.0-SNAPSHOT</span></span>
          <span><span class="az-env d-block">Test</span><span class="az-envsub d-block">My Local Azkaban</span></span>
        </a>
        <ul class="az-nav nav flex-nowrap">
          <li class="nav-item"><a class="nav-link" href="#">Projects</a></li>
          <li class="nav-item"><a class="nav-link active" href="#" aria-current="page"><span>Scheduling</span></a></li>
          <li class="nav-item"><a class="nav-link" href="#">Executing</a></li>
          <li class="nav-item"><a class="nav-link" href="#">History</a></li>
          <li class="nav-item"><a class="nav-link" href="#">Flow Trigger Schedule</a></li>
        </ul>
        <button class="az-user plain-btn dropdown-toggle ms-auto" type="button" data-bs-toggle="dropdown">admin</button>
      </div>
      <div class="az-head"><h1>Scheduled Flows</h1></div>
      <main class="az-main">
        <p class="az-hint">* Click column headers to sort.</p>
        <table class="table table-striped flow-table">
          <colgroup><col style="width:25px"><col style="width:33px"><col style="width:57px"><col style="width:121px"><col style="width:134px"><col style="width:218px"><col style="width:197px"><col style="width:142px"><col style="width:163px"><col style="width:178px"><col style="width:92px"><col style="width:173px"><col style="width:102px"></colgroup>
          <thead><tr><th>#</th><th>ID</th><th>Flow</th><th>Project</th><th>Submitted By</th><th>First Scheduled to Run</th><th>Next Execution Time</th><th>Repeats Every</th><th>Cron Expression</th><th>Execution Options</th><th>Has SLA</th><th colspan="2">Action</th></tr></thead>
          <tbody><tr><td>1</td><td>1</td><td><a href="#">bar</a></td><td><a href="#">depend_task</a></td><td>admin</td><td>2023-01-19 22:26:13</td><td>2023-01-19 22:30:00</td><td>Not Applicable</td><td>0 /3 22-23 19 1 ?</td>
            <td><button class="btn act-btn act-info" type="button">Show</button></td><td>false</td>
            <td><button class="btn act-btn act-danger" type="button">Remove Schedule</button></td><td><button class="btn act-btn act-primary" type="button">Set SLA</button></td></tr></tbody>
        </table>
      </main>
    </div>
  </div>
</div>
<div class="watermark">CSDN @雨诺风</div>
<script src="https://cdn.jsdelivr.net/npm/bootstrap@5.3.0/dist/js/bootstrap.bundle.min.js"></script>
</body>
</html>
